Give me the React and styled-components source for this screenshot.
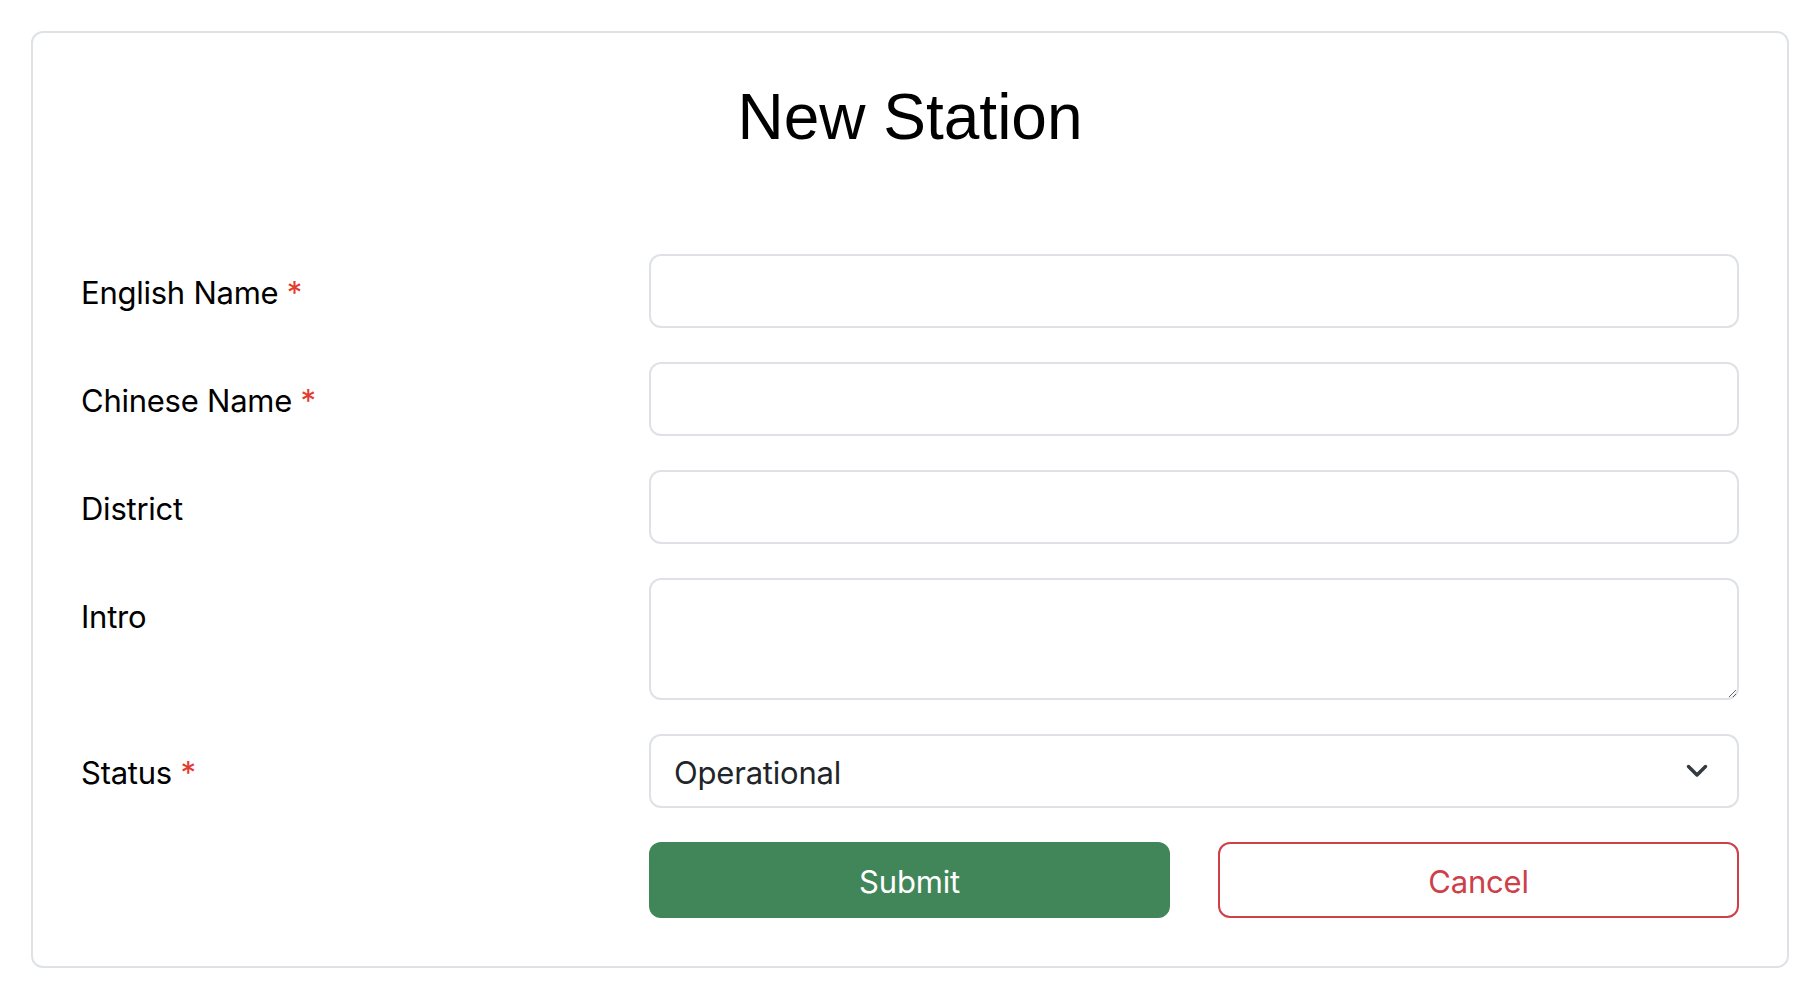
import React from "react";
import styled, { createGlobalStyle } from "styled-components";

const GlobalStyle = createGlobalStyle`
  html, body {
    margin: 0;
    padding: 0;
    background: #ffffff;
  }
  * { box-sizing: border-box; }
`;

const Page = styled.div`
  padding: 31px;
  font-family: "Inter", "Noto Sans", sans-serif;
`;

const Card = styled.div`
  border: 2px solid #dee2e6;
  border-radius: 12px;
  background: #fff;
  padding: 47px 48px 48px;
`;

const Title = styled.h2`
  margin: 0 0 99px;
  text-align: center;
  font-family: "Liberation Sans", Arial, sans-serif;
  font-weight: 400;
  font-size: 64px;
  line-height: 75px;
  color: #000;
`;

const Row = styled.div`
  display: grid;
  grid-template-columns: 522px 1fr;
  column-gap: 46px;
  margin-bottom: ${(p) => (p.$last ? "0" : "34px")};
`;

const Label = styled.label`
  font-size: 31px;
  line-height: 1.5;
  padding-top: 16px;
  color: #000;
  letter-spacing: -0.25px;
`;

const Required = styled.span`
  color: #e53b2f;
`;

const fieldBase = `
  width: 100%;
  border: 2px solid #dee2e6;
  border-radius: 12px;
  background: #fff;
  font-family: "Inter", "Noto Sans", sans-serif;
  font-size: 31px;
  line-height: 1.5;
  color: #212529;
  outline: none;
`;

const Input = styled.input`
  ${fieldBase}
  height: 74px;
  padding: 0 23px;
`;

const TextArea = styled.textarea`
  ${fieldBase}
  height: 122px;
  padding: 11px 23px;
  resize: vertical;
  display: block;
`;

const SelectWrap = styled.div`
  position: relative;
`;

const Select = styled.select`
  ${fieldBase}
  height: 74px;
  padding: 4px 70px 0 23px;
  appearance: none;
  -webkit-appearance: none;
  letter-spacing: -0.2px;
`;

const Chevron = styled.svg`
  position: absolute;
  right: 31px;
  top: 50%;
  transform: translateY(-50%);
  pointer-events: none;
`;

const Actions = styled.div`
  display: grid;
  grid-template-columns: 1fr 1fr;
  column-gap: 48px;
`;

const Button = styled.button`
  height: 76px;
  padding: 4px 0 0;
  border-radius: 12px;
  font-family: "Inter", "Noto Sans", sans-serif;
  font-size: 31px;
  line-height: 1.5;
  letter-spacing: -0.2px;
  cursor: pointer;
  border: 2px solid ${(p) => (p.$variant === "danger" ? "#cd4048" : "#418659")};
  background: ${(p) => (p.$variant === "danger" ? "#ffffff" : "#418659")};
  color: ${(p) => (p.$variant === "danger" ? "#cd4048" : "#ffffff")};
`;

const fields = [
  { id: "en", label: "English Name", required: true },
  { id: "zh", label: "Chinese Name", required: true },
  { id: "district", label: "District", required: false },
];

export default function App() {
  return (
    <Page>
      <GlobalStyle />
      <Card>
        <Title>New Station</Title>
        <form onSubmit={(e) => e.preventDefault()}>
          {fields.map((f) => (
            <Row key={f.id}>
              <Label htmlFor={f.id}>
                {f.label}
                {f.required && <Required> *</Required>}
              </Label>
              <Input id={f.id} type="text" />
            </Row>
          ))}
          <Row>
            <Label htmlFor="intro">Intro</Label>
            <TextArea id="intro" />
          </Row>
          <Row>
            <Label htmlFor="status">
              Status<Required> *</Required>
            </Label>
            <SelectWrap>
              <Select id="status" defaultValue="operational">
                <option value="operational">Operational</option>
                <option value="closed">Closed</option>
                <option value="construction">Under Construction</option>
              </Select>
              <Chevron width="22" height="14" viewBox="0 0 22 14" aria-hidden="true">
                <path
                  d="M2.5 2.5 L11 11 L19.5 2.5"
                  fill="none"
                  stroke="#343a40"
                  strokeWidth="3.5"
                  strokeLinecap="round"
                  strokeLinejoin="round"
                />
              </Chevron>
            </SelectWrap>
          </Row>
          <Row $last>
            <div />
            <Actions>
              <Button type="submit">Submit</Button>
              <Button type="button" $variant="danger">Cancel</Button>
            </Actions>
          </Row>
        </form>
      </Card>
    </Page>
  );
}
